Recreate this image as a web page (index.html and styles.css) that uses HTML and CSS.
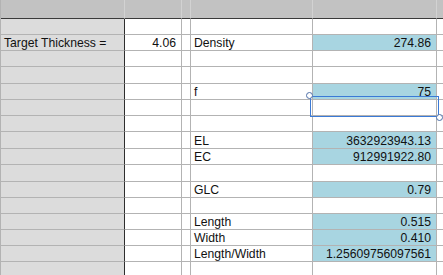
FILE: index.html
```html
<!DOCTYPE html>
<html>
<head>
<meta charset="utf-8">
<link rel="stylesheet" href="styles.css">
</head>
<body>
<div class="sheet">
  <div class="row head"><div class="c a"></div><div class="c b"></div><div class="c cc"></div><div class="c d"></div><div class="c e"></div><div class="c f"></div></div>
  <div class="row"><div class="c a"></div><div class="c b"></div><div class="c cc"></div><div class="c d"></div><div class="c e"></div><div class="c f"></div></div>
  <div class="row"><div class="c a">Target Thickness =</div><div class="c b num">4.06</div><div class="c cc"></div><div class="c d">Density</div><div class="c e num val">274.86</div><div class="c f"></div></div>
  <div class="row"><div class="c a"></div><div class="c b"></div><div class="c cc"></div><div class="c d"></div><div class="c e"></div><div class="c f"></div></div>
  <div class="row tall"><div class="c a"></div><div class="c b"></div><div class="c cc"></div><div class="c d"></div><div class="c e"></div><div class="c f"></div></div>
  <div class="row"><div class="c a"></div><div class="c b"></div><div class="c cc"></div><div class="c d">f</div><div class="c e num val">75</div><div class="c f"></div></div>
  <div class="row"><div class="c a"></div><div class="c b"></div><div class="c cc"></div><div class="c d"></div><div class="c e"></div><div class="c f"></div></div>
  <div class="row"><div class="c a"></div><div class="c b"></div><div class="c cc"></div><div class="c d"></div><div class="c e"></div><div class="c f"></div></div>
  <div class="row tall"><div class="c a"></div><div class="c b"></div><div class="c cc"></div><div class="c d">EL</div><div class="c e num val">3632923943.13</div><div class="c f"></div></div>
  <div class="row"><div class="c a"></div><div class="c b"></div><div class="c cc"></div><div class="c d">EC</div><div class="c e num val">912991922.80</div><div class="c f"></div></div>
  <div class="row tall"><div class="c a"></div><div class="c b"></div><div class="c cc"></div><div class="c d"></div><div class="c e"></div><div class="c f"></div></div>
  <div class="row"><div class="c a"></div><div class="c b"></div><div class="c cc"></div><div class="c d">GLC</div><div class="c e num val">0.79</div><div class="c f"></div></div>
  <div class="row"><div class="c a"></div><div class="c b"></div><div class="c cc"></div><div class="c d"></div><div class="c e"></div><div class="c f"></div></div>
  <div class="row"><div class="c a"></div><div class="c b"></div><div class="c cc"></div><div class="c d">Length</div><div class="c e num val">0.515</div><div class="c f"></div></div>
  <div class="row"><div class="c a"></div><div class="c b"></div><div class="c cc"></div><div class="c d">Width</div><div class="c e num val">0.410</div><div class="c f"></div></div>
  <div class="row"><div class="c a"></div><div class="c b"></div><div class="c cc"></div><div class="c d">Length/Width</div><div class="c e num val">1.25609756097561</div><div class="c f"></div></div>
  <div class="row"><div class="c a"></div><div class="c b"></div><div class="c cc"></div><div class="c d"></div><div class="c e"></div><div class="c f"></div></div>

  <div class="selection">
    <span class="handle tl"></span>
    <span class="handle br"></span>
  </div>
</div>
</body>
</html>
```

FILE: styles.css
```css
html, body {
  margin: 0;
  padding: 0;
  background: #ffffff;
  overflow: hidden;
}

.sheet {
  position: relative;
  width: 443px;
  height: 275px;
  display: flex;
  flex-direction: column;
  border-left: 1px solid #b3b3b3;
  box-sizing: border-box;
  font-family: "Liberation Sans", Arial, sans-serif;
  font-size: 12.2px;
  color: #111111;
}

.row {
  display: grid;
  grid-template-columns: 124px 57px 9px 122px 124px 1fr;
  height: 16px;
  flex: none;
}

.row.tall {
  height: 17px;
}

.row.head {
  height: 19px;
}

.c {
  box-sizing: border-box;
  border-right: 1px solid #b3b3b3;
  border-bottom: 1px solid #b3b3b3;
  display: flex;
  align-items: flex-end;
  line-height: 14px;
  padding: 0 3px;
  white-space: nowrap;
  overflow: hidden;
}

.c.a {
  background: #dcdcdc;
  border-right-color: #2e2e2e;
}

.head .c {
  background: #c2c2c2;
  border-right-color: #d2d2d2;
  border-bottom-color: #3a3a3a;
}

.c.f {
  border-right: none;
}

.num {
  justify-content: flex-end;
  padding-right: 5px;
}

.val {
  background: #a8d5e1;
}

.selection {
  position: absolute;
  left: 309px;
  top: 96px;
  width: 129px;
  height: 21px;
  box-sizing: border-box;
  border: 1.5px solid #3b7ad6;
}

.handle {
  position: absolute;
  width: 7px;
  height: 7px;
  box-sizing: border-box;
  border-radius: 50%;
  background: #ffffff;
  border: 1px solid #4d6fa8;
}

.handle.tl {
  left: -5px;
  top: -5px;
}

.handle.br {
  right: -5px;
  bottom: -5px;
}
```
